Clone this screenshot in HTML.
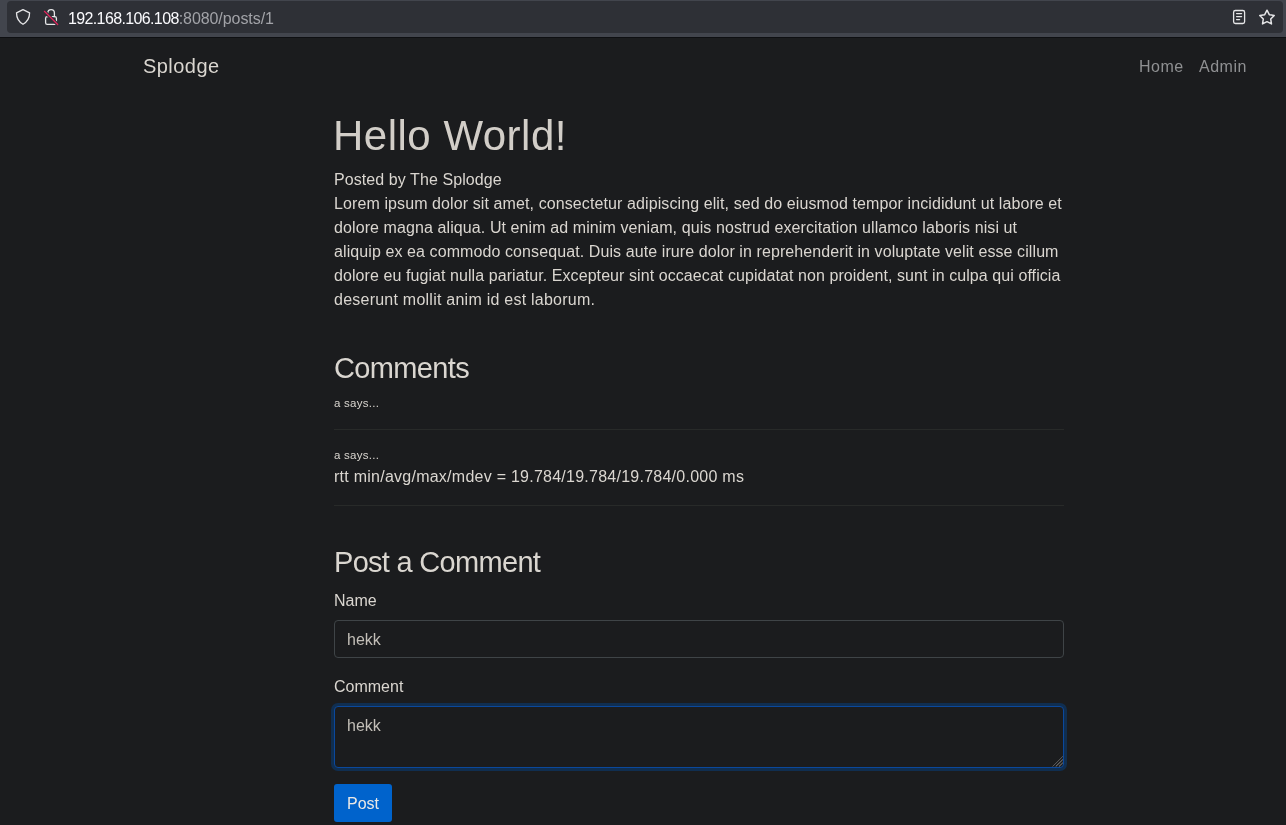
<!DOCTYPE html>
<html><head><meta charset="utf-8">
<style>
html,body{margin:0;padding:0;width:1286px;height:825px;overflow:hidden;background:#1b1c1e;}
body{position:relative;font-family:"Liberation Sans",sans-serif;color:#dad6d0;}
.t{position:absolute;white-space:pre;line-height:1;will-change:transform;}
#tb{position:absolute;left:0;top:0;width:1286px;height:37px;background:#42454d;}
#tbl{position:absolute;left:0;top:37px;width:1286px;height:1px;background:#0e0f12;}
#url{position:absolute;left:7px;top:1px;width:1276px;height:32px;background:#2e3036;border-radius:4px;}
.hr{position:absolute;left:334px;width:730px;height:1px;background:#282a29;}
.inp{position:absolute;left:334px;width:730px;box-sizing:border-box;border:1px solid #3f4447;border-radius:4px;background:#1b1c1e;}
.p{font-size:16px;letter-spacing:0.09px;}
svg{position:absolute;left:0;top:0;}
</style></head>
<body>
<div id="tb"></div><div id="tbl"></div>
<div id="url"></div>
<svg width="1286" height="37" viewBox="0 0 1286 37">
  <g fill="none" stroke="#e6e6e8" stroke-width="1.3" stroke-linejoin="round" stroke-linecap="round">
    <path d="M23 9.6 L16.5 12.8 C16.5 18.5 18.6 21.8 23 24.3 C27.4 21.8 29.6 18.5 29.6 12.8 Z"/>
    <path d="M47.8 16.6 V13 A3.3 3.3 0 0 1 54.4 13 V16.6"/>
    <rect x="45.6" y="16.7" width="10.8" height="7.7" rx="1.6"/>
    <rect x="1233.6" y="10.5" width="11" height="13" rx="1.8"/>
    <path d="M1236.6 13.6 H1241.6 M1236.6 16.6 H1241.6 M1236.6 19.6 H1239.6"/>
    <path d="M1267.00 10.20 L1269.29 14.64 L1274.23 15.45 L1270.71 19.01 L1271.47 23.95 L1267.00 21.70 L1262.53 23.95 L1263.29 19.01 L1259.77 15.45 L1264.71 14.64 Z" stroke-width="1.5"/>
  </g>
  <path d="M44.4 11.3 L57.7 24.5" stroke="#2e3036" stroke-width="3.2" stroke-linecap="round"/>
  <path d="M44.4 11.3 L57.7 24.5" stroke="#e2245c" stroke-width="1.2" stroke-linecap="round"/>
</svg>
<div class="t" style="left:68px;top:10.5px;font-size:16px;letter-spacing:-0.63px;color:#fbfbfe">192.168.106.108<span style="color:#a2a3a8;letter-spacing:-0.07px">:8080/posts/1</span></div>

<div class="t" style="left:143px;top:56px;font-size:20px;letter-spacing:0.45px">Splodge</div>
<div class="t" style="left:1139px;top:59px;font-size:16px;letter-spacing:0.5px;color:#8f9092">Home</div>
<div class="t" style="left:1199px;top:59px;font-size:16px;letter-spacing:0.5px;color:#8f9092">Admin</div>

<div class="t" style="left:333px;top:115px;font-size:42px;letter-spacing:0.5px;color:#d2cec8">Hello World!</div>
<div class="t" style="left:334px;top:172px;font-size:16px;letter-spacing:0.08px">Posted by The Splodge</div>
<div class="t p" style="left:334px;top:196px;letter-spacing:0.10px">Lorem ipsum dolor sit amet, consectetur adipiscing elit, sed do eiusmod tempor incididunt ut labore et</div>
<div class="t p" style="left:334px;top:220px;letter-spacing:0.095px">dolore magna aliqua. Ut enim ad minim veniam, quis nostrud exercitation ullamco laboris nisi ut</div>
<div class="t p" style="left:334px;top:244px;letter-spacing:0.093px">aliquip ex ea commodo consequat. Duis aute irure dolor in reprehenderit in voluptate velit esse cillum</div>
<div class="t p" style="left:334px;top:268px;letter-spacing:0.076px">dolore eu fugiat nulla pariatur. Excepteur sint occaecat cupidatat non proident, sunt in culpa qui officia</div>
<div class="t p" style="left:334px;top:292px;letter-spacing:0.24px">deserunt mollit anim id est laborum.</div>

<div class="t" style="left:334px;top:354px;font-size:29px;letter-spacing:-0.65px">Comments</div>
<div class="t" style="left:334px;top:398px;font-size:11.5px;letter-spacing:0.25px">a says...</div>
<div class="hr" style="top:429px"></div>
<div class="t" style="left:334px;top:450px;font-size:11.5px;letter-spacing:0.25px">a says...</div>
<div class="t" style="left:334px;top:469px;font-size:16px;letter-spacing:0.25px">rtt min/avg/max/mdev = 19.784/19.784/19.784/0.000 ms</div>
<div class="hr" style="top:505px"></div>

<div class="t" style="left:334px;top:548px;font-size:29px;letter-spacing:-0.7px">Post a Comment</div>
<div class="t" style="left:334px;top:593px;font-size:16px">Name</div>
<div class="inp" style="top:620px;height:38px"></div>
<div class="t" style="left:347px;top:632px;font-size:16px;color:#c3bfb8">hekk</div>
<div class="t" style="left:334px;top:679px;font-size:16px">Comment</div>
<div class="inp" style="top:706px;height:62px;border-color:#0a489c;box-shadow:0 0 0 3px #102e50;"></div>
<svg style="left:1050px;top:754px" width="14" height="14" viewBox="1050 754 14 14"><g stroke="#8a8886" stroke-width="1" stroke-linecap="round"><path d="M1052.8 766.3 L1062.6 756.6" stroke="#606060"/><path d="M1056 766.3 L1062.6 759.8"/><path d="M1059.2 766.3 L1062.6 763"/></g></svg>
<div class="t" style="left:347px;top:718px;font-size:16px;color:#c3bfb8">hekk</div>
<div style="position:absolute;left:334px;top:784px;width:58px;height:38px;background:#0063cc;border-radius:3px"></div>
<div class="t" style="left:347px;top:796px;font-size:16px;color:#ebe9e6">Post</div>
</body></html>
